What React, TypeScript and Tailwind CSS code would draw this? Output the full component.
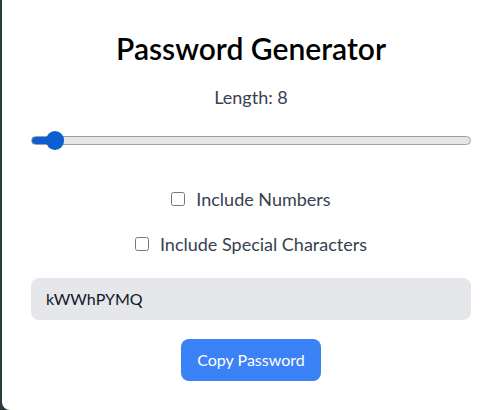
import React, { useState } from "react";

export default function App() {
  const [length, setLength] = useState(8);
  const [nums, setNums] = useState(false);
  const [special, setSpecial] = useState(false);
  const min = 6;
  const max = 64;
  const frac = (length - min) / (max - min);
  return (
    <div className="w-[500px] h-[410px] bg-[#2b3a3a] pl-[2px] overflow-hidden" style={{ fontFamily: 'Lato, "Open Sans", sans-serif' }}>
      <div className="h-[410px] bg-white rounded-bl-lg pl-[29px] pr-[29px] pt-[30px] flex flex-col items-stretch">
        <h1 className="text-[30px] leading-[36px] font-semibold text-black text-center">Password Generator</h1>
        <div className="mt-[17px] text-center text-[18px] leading-[28px] text-[#374151]">Length: {length}</div>
        <input
          type="range"
          min={min}
          max={max}
          value={length}
          onChange={(e) => setLength(Number(e.target.value))}
          className="mt-[25px] w-full h-[9px] m-0 appearance-none rounded-full border border-[#a0a0a0] [&::-webkit-slider-thumb]:appearance-none [&::-webkit-slider-thumb]:w-[18px] [&::-webkit-slider-thumb]:h-[19px] [&::-webkit-slider-thumb]:rounded-full [&::-webkit-slider-thumb]:bg-[#0b5fd0] [&::-webkit-slider-thumb]:border-0"
          style={{
            background: `linear-gradient(to right, #0b5fd0 calc(9px + ${frac} * (100% - 18px)), #e5e5e5 0)`,
          }}
        />
        <label className="mt-[40px] flex items-center justify-center gap-[11px] text-[18px] leading-[28px] text-[#374151]">
          <input type="checkbox" checked={nums} onChange={(e) => setNums(e.target.checked)} className="w-[14px] h-[14px] m-0" />
          Include Numbers
        </label>
        <label className="mt-[17px] flex items-center justify-center gap-[11px] text-[18px] leading-[28px] text-[#374151]">
          <input type="checkbox" checked={special} onChange={(e) => setSpecial(e.target.checked)} className="w-[14px] h-[14px] m-0" />
          Include Special Characters
        </label>
        <div className="mt-[20px] h-[42px] rounded-lg bg-[#e5e7eb] px-[15px] flex items-center text-[16px] text-[#111827]">
          kWWhPYMQ
        </div>
        <div className="mt-[19px] flex justify-center">
          <button className="h-[42px] w-[140px] rounded-lg bg-[#3b82f6] text-white text-[16px]">Copy Password</button>
        </div>
      </div>
    </div>
  );
}
